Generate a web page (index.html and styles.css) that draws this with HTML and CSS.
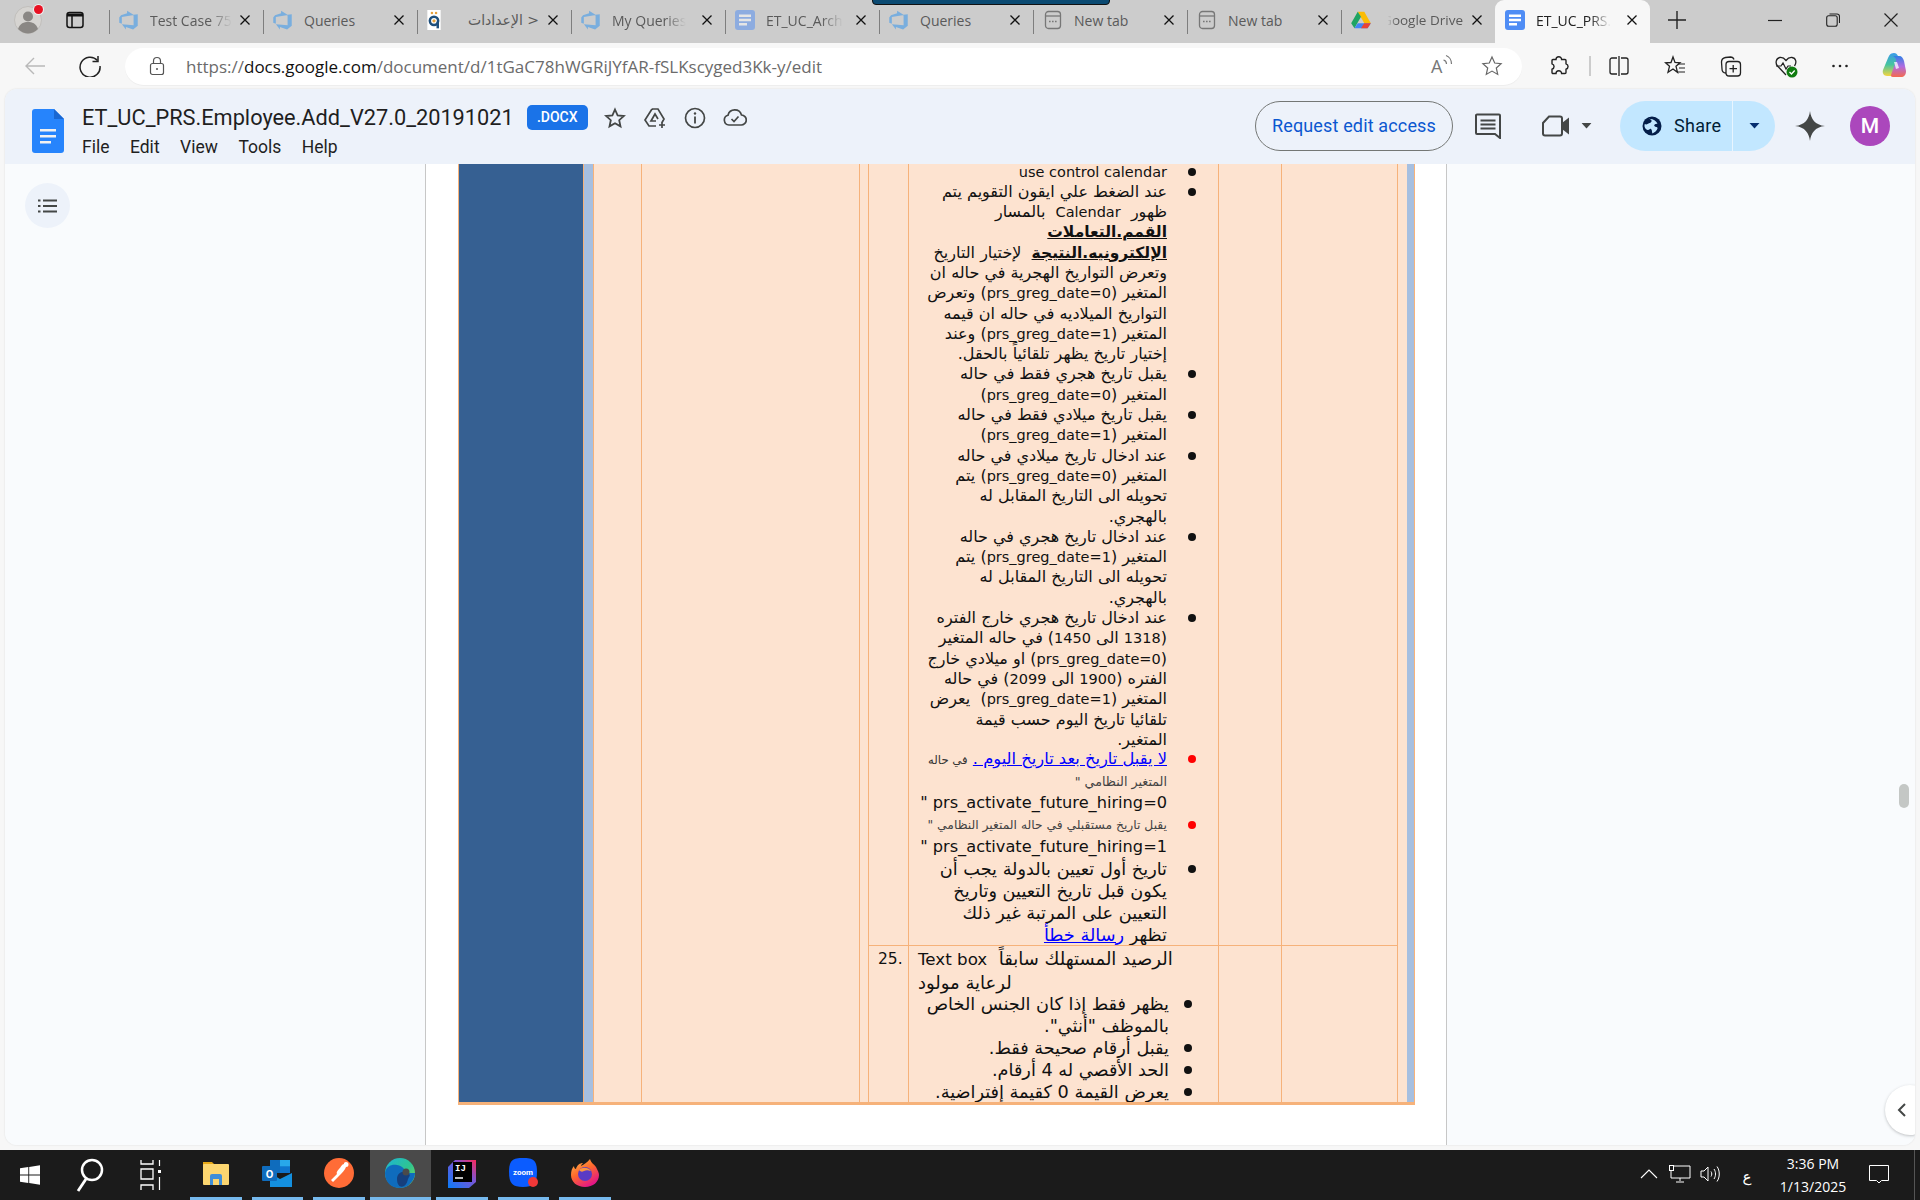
FILE: index.html
```html
<!DOCTYPE html>
<html lang="en">
<head>
<meta charset="utf-8">
<title>ET_UC_PRS.Employee.Add_V27.0_20191021</title>
<link rel="stylesheet" href="styles.css">
</head>
<body>
<svg class="defs" width="0" height="0" aria-hidden="true">
  <symbol id="i-ado" viewBox="0 0 24 24"><path fill="#79aede" d="M22.5 5v14l-5.6 4.5-8.6-3.100v3l-4.800-6.200 14 1.100V5.600zM17.800 5.900 9.700.9v3.100L2.400 6.200.3 9v6.300l3.100 1.300V8.500z"/></symbol>
  <symbol id="i-doc" viewBox="0 0 20 20"><rect width="20" height="20" rx="3" fill="#4f8df5"/><path fill="#fff" d="M4 4.500h12v2.400H4zM4 8.800h12v2.400H4zM4 13.100h8v2.400H4z"/></symbol>
  <symbol id="i-new" viewBox="0 0 20 20"><rect x="2.500" y="1.500" width="15" height="17" rx="3" fill="none" stroke="#777" stroke-width="1.300"/><path stroke="#777" stroke-width="1.300" d="M3 6h14"/><path stroke="#777" stroke-width="1.600" stroke-dasharray="1.600 1.400" d="M6 11.500h8"/></symbol>
  <symbol id="i-x" viewBox="0 0 12 12"><path d="M1.500 1.500l9 9M10.500 1.500l-9 9" stroke="#111" stroke-width="1.300" fill="none"/></symbol>
  <symbol id="i-caret" viewBox="0 0 10 6"><path d="M0 0h10L5 5.500z" fill="#444746"/></symbol>
</svg>

<div class="overlay-bar"></div>

<header class="tabstrip">
  <div class="strip-left">
    <span class="profile">
      <svg viewBox="0 0 28 28" width="28" height="28"><circle cx="14" cy="14" r="13.500" fill="#d6d4d1" stroke="#c0bebb"/><circle cx="14" cy="10.500" r="5" fill="#8a8784"/><path d="M4 23c2-6 6-7 10-7s8 1 10 7c-3 3-7 4.500-10 4.500S7 26 4 23z" fill="#8a8784"/></svg>
      <span class="profile-dot"></span>
    </span>
    <svg class="strip-icon" viewBox="0 0 20 20" width="20" height="20"><rect x="2" y="2.500" width="16" height="15" rx="2.500" fill="none" stroke="#111" stroke-width="1.500"/><path d="M2 3.500h16v3H2z" fill="#111"/><path d="M7 6v11" stroke="#111" stroke-width="1.500"/></svg>
  </div>
  <div class="tab">
    <svg class="tab-icon"><use href="#i-ado"/></svg><span class="tab-title tab-fade">Test Case 75</span><svg class="tab-x"><use href="#i-x"/></svg>
  </div>
  <div class="tab">
    <svg class="tab-icon"><use href="#i-ado"/></svg><span class="tab-title">Queries</span><svg class="tab-x"><use href="#i-x"/></svg>
  </div>
  <div class="tab">
    <svg class="tab-icon tab-icon-q" viewBox="0 0 16 24"><rect width="16" height="24" fill="#fff"/><circle cx="8" cy="13" r="5" fill="none" stroke="#1e4f7c" stroke-width="3"/><path d="M11 14h3v8h-3z" fill="#1e4f7c"/><circle cx="5.500" cy="3.500" r="1.500" fill="#e7a13c"/><circle cx="10.500" cy="3.500" r="1.500" fill="#e7a13c"/><circle cx="8" cy="13" r="2" fill="#e7a13c"/></svg>
    <span class="tab-title tab-title-ar" dir="rtl">&lt; الإعدادات</span><svg class="tab-x"><use href="#i-x"/></svg>
  </div>
  <div class="tab">
    <svg class="tab-icon"><use href="#i-ado"/></svg><span class="tab-title tab-fade">My Queries</span><svg class="tab-x"><use href="#i-x"/></svg>
  </div>
  <div class="tab">
    <svg class="tab-icon tab-icon-faded"><use href="#i-doc"/></svg><span class="tab-title tab-fade">ET_UC_Arch</span><svg class="tab-x"><use href="#i-x"/></svg>
  </div>
  <div class="tab">
    <svg class="tab-icon"><use href="#i-ado"/></svg><span class="tab-title">Queries</span><svg class="tab-x"><use href="#i-x"/></svg>
  </div>
  <div class="tab">
    <svg class="tab-icon"><use href="#i-new"/></svg><span class="tab-title">New tab</span><svg class="tab-x"><use href="#i-x"/></svg>
  </div>
  <div class="tab">
    <svg class="tab-icon"><use href="#i-new"/></svg><span class="tab-title">New tab</span><svg class="tab-x"><use href="#i-x"/></svg>
  </div>
  <div class="tab">
    <svg class="tab-icon tab-icon-drive" viewBox="0 0 24 22"><path d="M8 1h8l8 14h-8z" fill="#fbbc04"/><path d="M8 1 0 15l4 6 8-14z" fill="#1fa463"/><path d="M8 15h16l-4 6H4z" fill="#4285f4"/><path d="M16 15h8l-4 6h-8z" fill="#ea4335"/></svg>
    <span class="tab-title tab-title-drive">Google Drive</span><svg class="tab-x"><use href="#i-x"/></svg>
  </div>
  <div class="tab tab-active">
    <svg class="tab-icon"><use href="#i-doc"/></svg><span class="tab-title tab-fade">ET_UC_PRS.</span><svg class="tab-x"><use href="#i-x"/></svg>
  </div>
  <svg class="tab-plus" viewBox="0 0 20 20" width="20" height="20"><path d="M10 1v18M1 10h18" stroke="#222" stroke-width="1.400"/></svg>
  <div class="win-controls">
    <svg viewBox="0 0 14 14" width="14" height="14"><path d="M0 7.500h14" stroke="#222" stroke-width="1.200"/></svg>
    <svg viewBox="0 0 14 14" width="14" height="14"><rect x=".7" y="2.700" width="10.500" height="10.500" rx="2" fill="none" stroke="#222" stroke-width="1.100"/><path d="M3.500 1h7.500a2.500 2.500 0 0 1 2.500 2.500V10" fill="none" stroke="#222" stroke-width="1.100"/></svg>
    <svg viewBox="0 0 14 14" width="14" height="14"><path d="M.5.500l13 13M13.500.500l-13 13" stroke="#222" stroke-width="1.200"/></svg>
  </div>
</header>

<nav class="toolbar">
  <svg class="nav-back" viewBox="0 0 22 22" width="22" height="22"><path d="M21 11H2M10 3l-8 8 8 8" fill="none" stroke="#b9b9b9" stroke-width="1.400"/></svg>
  <svg class="nav-reload" viewBox="0 0 22 22" width="22" height="22"><path d="M18.500 5.500A10 10 0 1 0 21 11" fill="none" stroke="#222" stroke-width="1.500"/><path d="M19 1v5.500h-5.500" fill="none" stroke="#222" stroke-width="1.500"/></svg>
  <div class="address">
    <svg class="lock" viewBox="0 0 16 20" width="16" height="20"><rect x="1.500" y="7.500" width="13" height="11" rx="2" fill="none" stroke="#555" stroke-width="1.200"/><path d="M4.500 7.500V5a3.500 3.500 0 0 1 7 0v2.500" fill="none" stroke="#555" stroke-width="1.200"/><circle cx="8" cy="13" r="1" fill="#555"/></svg>
    <span class="url">https://<b>docs.google.com</b>/document/d/1tGaC78hWGRiJYfAR-fSLKscyged3Kk-y/edit</span>
    <span class="address-icons">
      <span class="read-aloud">
        <span class="read-a">A</span>
        <svg viewBox="0 0 12 12" width="12" height="12"><path d="M1.500 6c2 .5 3 2 3 4M4 1.500c3 1 5.500 4.500 5.500 8.500" fill="none" stroke="#777" stroke-width="1.200"/></svg>
      </span>
      <svg viewBox="0 0 22 22" width="22" height="22"><path d="M11 2l2.700 6 6.400.7-4.800 4.300 1.400 6.400-5.700-3.300-5.700 3.300L6.700 13 1.900 8.700 8.300 8z" fill="none" stroke="#666" stroke-width="1.200"/></svg>
    </span>
  </div>
  <div class="tools">
    <svg class="tool-puzzle" viewBox="0 0 22 22" width="22" height="22"><path d="M8 4.500a2.800 2.800 0 0 1 5.600 0h3.400a1 1 0 0 1 1 1v3.300a2.800 2.800 0 0 1 0 5.400v3.300a1 1 0 0 1-1 1h-3.400a2.800 2.800 0 0 0-5.600 0H5a1 1 0 0 1-1-1v-3.300a2.800 2.800 0 0 0 0-5.400V5.500a1 1 0 0 1 1-1z" fill="none" stroke="#222" stroke-width="1.400"/></svg>
    <span class="tool-sep"></span>
    <svg class="tool" viewBox="0 0 22 22" width="22" height="22"><path d="M9 3H4a2 2 0 0 0-2 2v12a2 2 0 0 0 2 2h5M13 3h5a2 2 0 0 1 2 2v12a2 2 0 0 1-2 2h-5M11 1v20" fill="none" stroke="#222" stroke-width="1.300"/></svg>
    <svg class="tool" viewBox="0 0 22 22" width="22" height="22"><path d="M9 2l2 5.500 5 .3-4 3.500 1.500 6L9 14l-5 3.300 1.500-6-4-3.500 5.500-.3z" fill="none" stroke="#222" stroke-width="1.300"/><path d="M14 9h7M15 13h6M14 17h7" stroke="#222" stroke-width="1.200"/></svg>
    <svg class="tool" viewBox="0 0 22 22" width="22" height="22"><path d="M6 18c-3 0-4-2-4-4L1.500 7c0-2 1.500-4 4-4.500l5-.5c2 0 3 1 3.500 2.500" fill="none" stroke="#222" stroke-width="1.300"/><rect x="6" y="6.500" width="14.500" height="14.500" rx="3" fill="none" stroke="#222" stroke-width="1.300"/><path d="M13.200 10v7.500M9.500 13.700h7.500" stroke="#222" stroke-width="1.300"/></svg>
    <span class="tool-health">
      <svg viewBox="0 0 24 24" width="24" height="24"><path d="M12 21 3.500 12C1 9 2 4 6 3.500c2.500-.3 4.500 1 6 3 1.500-2 3.500-3.300 6-3 4 .5 5 5 2.500 8.500" fill="none" stroke="#222" stroke-width="1.300"/><path d="M2 12h5l2-3 3 6 2-3h3" fill="none" stroke="#222" stroke-width="1.200"/><circle cx="18" cy="18" r="5.500" fill="#107c10"/><path d="M15.500 18l2 2 3.200-3.500" fill="none" stroke="#fff" stroke-width="1.300"/></svg>
    </span>
    <svg class="tool tool-dots" viewBox="0 0 22 22" width="22" height="22"><circle cx="4.500" cy="11" r="1.300" fill="#222"/><circle cx="11" cy="11" r="1.300" fill="#222"/><circle cx="17.500" cy="11" r="1.300" fill="#222"/></svg>
    <svg class="tool-copilot" viewBox="0 0 28 28" width="28" height="28">
      <defs>
        <linearGradient id="cp1" x1="0" y1="0" x2="0" y2="1"><stop offset="0" stop-color="#3a9bea"/><stop offset=".5" stop-color="#45c4a0"/><stop offset="1" stop-color="#f4d53f"/></linearGradient>
        <linearGradient id="cp2" x1="0" y1="0" x2="0" y2="1"><stop offset="0" stop-color="#2f7fe6"/><stop offset=".5" stop-color="#b06be0"/><stop offset="1" stop-color="#f56a4f"/></linearGradient>
      </defs>
      <path d="M15 1c-4 0-5 3-6 5L4 18c-1 3 1 6 4 6h5l6-20c-1-2-2-3-4-3z" fill="url(#cp1)"/>
      <path d="M14 4h6c3 0 4 2 5 5l2 10c0 4-2 6-5 6h-8c-2 0-2-1-2-2l5-14c.3-1 0-3-3-5z" fill="url(#cp2)"/>
      <path d="M15 10h3l2 6-3 1z" fill="#fff" opacity=".75"/>
    </svg>
  </div>
</nav>

<main class="docs">
  <div class="docs-header">
    <svg class="docs-logo" viewBox="0 0 32 44" width="32" height="44"><path d="M3 0h19l10 10v31a3 3 0 0 1-3 3H3a3 3 0 0 1-3-3V3a3 3 0 0 1 3-3z" fill="#2684fc"/><path d="M22 0l10 10H22z" fill="#1967d2"/><path d="M8 20h16v2.500H8zM8 26h16v2.500H8zM8 32h11v2.500H8z" fill="#f1f1f1"/></svg>
    <div class="docs-titleblock">
      <div class="title-row">
        <span class="doc-title">ET_UC_PRS.Employee.Add_V27.0_20191021</span>
        <span class="docx-badge">.DOCX</span>
        <svg class="head-icon" viewBox="0 0 24 24" width="24" height="24"><path d="M12 3.500l2.600 5.800 6.300.7-4.700 4.200 1.300 6.200-5.500-3.200-5.500 3.200 1.300-6.200L3.100 10l6.300-.7z" fill="none" stroke="#444746" stroke-width="1.800"/></svg>
        <svg class="head-icon" viewBox="0 0 24 24" width="24" height="24"><path d="M9 3h6l6 10-2 3.500M13 20H6l-4-6 7-11M13 15H8l4-7 3 5" fill="none" stroke="#444746" stroke-width="1.700"/><path d="M19 16v6M16 19h6" stroke="#444746" stroke-width="1.700"/></svg>
        <svg class="head-icon" viewBox="0 0 24 24" width="24" height="24"><circle cx="12" cy="12" r="9.500" fill="none" stroke="#444746" stroke-width="1.700"/><path d="M12 10.500v7" stroke="#444746" stroke-width="1.800"/><circle cx="12" cy="7.500" r="1.200" fill="#444746"/></svg>
        <svg class="head-icon" viewBox="0 0 24 24" width="24" height="24"><path d="M6 19a5 5 0 0 1-1-9.800A7 7 0 0 1 18.500 9 5 5 0 0 1 18 19z" fill="none" stroke="#444746" stroke-width="1.700"/><path d="M8.500 13l2.500 2.500 4.500-5" fill="none" stroke="#444746" stroke-width="1.700"/></svg>
      </div>
      <div class="menu"><span>File</span><span>Edit</span><span>View</span><span>Tools</span><span>Help</span></div>
    </div>
    <div class="head-right">
      <span class="request-btn">Request edit access</span>
      <svg class="comment-icon" viewBox="0 0 26 26" width="26" height="26"><path d="M2 1.500h22a1 1 0 0 1 1 1V20l0 5-5-4H2a1 1 0 0 1-1-1V2.500a1 1 0 0 1 1-1z" fill="none" stroke="#444746" stroke-width="2"/><path d="M5.500 6.500h15v2h-15zM5.500 10.500h15v2h-15zM5.500 14.500h15v2h-15z" fill="#444746"/></svg>
      <span class="meet">
        <svg viewBox="0 0 28 22" width="28" height="22"><path d="M7 1.500h11a2 2 0 0 1 2 2V18.500a2 2 0 0 1-2 2H3a2 2 0 0 1-2-2V8z" fill="none" stroke="#444746" stroke-width="2"/><path d="M20 8l7-5.500v17L20 14z" fill="#444746"/></svg>
        <svg class="caret" viewBox="0 0 10 6"><use href="#i-caret"/></svg>
      </span>
      <span class="share">
        <span class="share-main">
          <svg viewBox="0 0 20 20" width="20" height="20"><circle cx="10" cy="10" r="9.500" fill="#041e49"/><path d="M7 2.500c1.500 1 3 1.500 2.500 3S6.500 7 5.500 8s-2 0-3 .5c-.5 2.500 1 5 3 5.500s2-2 3.500-1 .5 3 1.500 4.500c2-1 4.500-3 5-5s-2-1-3-2.500 1-2 3-2.500c-1.500-3-5-5-8.500-4.500z" fill="#c2e7ff"/></svg>
          Share
        </span>
        <span class="share-drop"><svg class="caret" viewBox="0 0 10 6"><path d="M0 0h10L5 5.500z" fill="#062e6f"/></svg></span>
      </span>
      <svg class="gemini" viewBox="0 0 30 30" width="30" height="30"><path d="M15 0c1 8 5 14 15 15-10 1-14 7-15 15-1-8-5-14-15-15C10 14 14 8 15 0z" fill="#444746"/></svg>
      <span class="avatar">M</span>
    </div>
  </div>

  <div class="docs-body">
    <aside class="side-left">
      <span class="outline-btn">
        <svg viewBox="0 0 20 14" width="20" height="14"><path d="M5 1.500h14M5 7h14M5 12.500h14" stroke="#444746" stroke-width="1.800"/><path d="M0 1.500h2.500M0 7h2.500M0 12.500h2.500" stroke="#444746" stroke-width="1.800"/></svg>
      </span>
    </aside>
    <section class="page">
      <div class="doc-table">
        <div class="col-blue"></div>
        <div class="col-lightblue"></div>
        <div class="col-plain col-a"></div>
        <div class="col-plain col-b"></div>
        <div class="col-plain col-c"></div>
        <div class="rows">
          <div class="row row-first">
            <div class="cell cell-num"></div>
            <div class="cell cell-main">
              <ul class="blist blist-top" dir="rtl">
                <li><span class="dot"></span><span class="txt"><span class="lat">use control calendar</span></span></li>
                <li><span class="dot"></span><span class="txt">عند الضغط علي ايقون التقويم يتم<br>ظهور&nbsp; <span class="lat">Calendar</span>&nbsp; بالمسار<br><b class="ul">القمم.التعاملات</b><br><b class="ul">الإلكترونيه.النتيجة</b>&nbsp; لإختيار التاريخ<br>وتعرض التواريخ الهجرية في حاله ان<br>المتغير (<span class="lat">prs_greg_date=0</span>) وتعرض<br>التواريخ الميلاديه في حاله ان قيمه<br>المتغير (<span class="lat">prs_greg_date=1</span>) وعند<br>إختيار تاريخ يظهر تلقائياً بالحقل.</span></li>
                <li><span class="dot"></span><span class="txt">يقبل تاريخ هجري فقط في حاله<br>المتغير (<span class="lat">prs_greg_date=0</span>)</span></li>
                <li><span class="dot"></span><span class="txt">يقبل تاريخ ميلادي فقط في حاله<br>المتغير (<span class="lat">prs_greg_date=1</span>)</span></li>
                <li><span class="dot"></span><span class="txt">عند ادخال تاريخ ميلادي في حاله<br>المتغير (<span class="lat">prs_greg_date=0</span>) يتم<br>تحويله الى التاريخ المقابل له<br>بالهجري.</span></li>
                <li><span class="dot"></span><span class="txt">عند ادخال تاريخ هجري في حاله<br>المتغير (<span class="lat">prs_greg_date=1</span>) يتم<br>تحويله الى التاريخ المقابل له<br>بالهجري.</span></li>
                <li><span class="dot"></span><span class="txt">عند ادخال تاريخ هجري خارج الفتره<br>(<span class="lat">1318</span> الى <span class="lat">1450</span>) في حاله المتغير<br>(<span class="lat">prs_greg_date=0</span>) او ميلادي خارج<br>الفتره (<span class="lat">1900</span> الى <span class="lat">2099</span>) في حاله<br>المتغير (<span class="lat">prs_greg_date=1</span>)&nbsp; يعرض<br>تلقائيا تاريخ اليوم حسب قيمة<br>المتغير.</span></li>
              </ul>
              <ul class="blist blist-red" dir="rtl">
                <li><span class="dot dot-red"></span><span class="txt"><span class="small-line"><a class="link">لا يقبل تاريخ بعد تاريخ اليوم .</a> <small>في حاله</small></span><span class="small-line small-grey">المتغير النظامي "</span><span class="var-line">prs_activate_future_hiring=0 "</span></span></li>
                <li><span class="dot dot-red"></span><span class="txt"><span class="small-line small-grey small-second">يقبل تاريخ مستقبلي في حاله المتغير النظامي "</span><span class="var-line">prs_activate_future_hiring=1 "</span></span></li>
              </ul>
              <ul class="blist blist-big" dir="rtl">
                <li><span class="dot"></span><span class="txt">تاريخ أول تعيين بالدولة يجب أن<br>يكون قبل تاريخ التعيين وتاريخ<br>التعيين على المرتبة غير ذلك<br>تظهر <a class="link">رسالة خطأ</a></span></li>
              </ul>
            </div>
            <div class="cell cell-c"></div>
            <div class="cell cell-d"></div>
          </div>
          <div class="row row-second">
            <div class="cell cell-num"><span class="num">25.</span></div>
            <div class="cell cell-main cell-main-2">
              <p class="field-name"><span class="field-lat">Text box</span>&nbsp; الرصيد المستهلك سابقاً<br>لرعاية مولود</p>
              <ul class="blist blist-big blist-second" dir="rtl">
                <li><span class="dot"></span><span class="txt">يظهر فقط إذا كان الجنس الخاص<br>بالموظف "أنثي".</span></li>
                <li><span class="dot"></span><span class="txt">يقبل أرقام صحيحة فقط.</span></li>
                <li><span class="dot"></span><span class="txt">الحد الأقصي له 4 أرقام.</span></li>
                <li><span class="dot"></span><span class="txt">يعرض القيمة 0 كقيمة إفتراضية.</span></li>
              </ul>
            </div>
            <div class="cell cell-c"></div>
            <div class="cell cell-d"></div>
          </div>
        </div>
        <div class="col-end"></div>
        <div class="col-lightblue col-lightblue-right"></div>
      </div>
    </section>
    <aside class="side-right"></aside>
    <span class="scroll-thumb"></span>
    <span class="collapse-btn"><svg viewBox="0 0 10 16" width="10" height="16"><path d="M8 2 2 8l6 6" fill="none" stroke="#444746" stroke-width="2"/></svg></span>
  </div>
</main>

<footer class="taskbar">
  <span class="tb-sys"><svg viewBox="0 0 20 20" width="20" height="20"><path fill="#fff" d="M0 3.200 8.300 2v7.500H0zM9.200 1.900 20 .3v9.200H9.200zM0 10.500h8.300V18L0 16.800zM9.200 10.500H20v9.200L9.200 18.100z"/></svg></span>
  <span class="tb-sys"><svg viewBox="0 0 28 36" width="28" height="36"><circle cx="16" cy="13" r="10" fill="none" stroke="#fff" stroke-width="2.500"/><path d="M10 22 2 34" stroke="#fff" stroke-width="2.800"/></svg></span>
  <span class="tb-sys"><svg viewBox="0 0 22 30" width="22" height="30"><path d="M2 0v4h12V0M2 9h12v10H2zM2 30v-5h12v5" fill="none" stroke="#fff" stroke-width="1.300"/><rect x="19" y="10" width="3" height="3" fill="#fff"/><path d="M20.500 0v6M20.500 17v13" stroke="#fff" stroke-width="1.200"/></svg></span>
  <span class="tb-gap"></span>
  <span class="tb-app"><svg viewBox="0 0 28 26" width="28" height="26"><path d="M1 2h9l3 3H1z" fill="#e6a817"/><rect x="1" y="4" width="26" height="21" rx="1" fill="#fcd670"/><path d="M8 25v-9a2 2 0 0 1 2-2h8a2 2 0 0 1 2 2v9h-3v-6h-6v6z" fill="#3f8ed8"/></svg></span>
  <span class="tb-app"><svg viewBox="0 0 30 28" width="30" height="28"><path d="M8 1h20v13H8z" fill="#0f6cbd"/><path d="M18 1h10v6.500H18z" fill="#28a8ea"/><path d="M18 7.500h10V14H18z" fill="#0f78d4" opacity=".75"/><path d="M8 14l10 6 12-6v14H8z" fill="#1490df"/><rect x="0" y="7" width="15" height="15" rx="1" fill="#0f6cbd"/><text x="7.500" y="19" class="ol-o">O</text></svg></span>
  <span class="tb-app"><svg viewBox="0 0 30 30" width="30" height="30"><circle cx="15" cy="15" r="15" fill="#ff6c37"/><path d="M22 4a2.500 2.500 0 0 1 0 5c-1 3-4 6-7 9l-6 6-2-2 6-6c-1-1 0-3 2-5s3-5 5-5c-.5-1 .5-2 2-2z" fill="#fff"/></svg></span>
  <span class="tb-app tb-active"><svg viewBox="0 0 30 30" width="30" height="30"><defs><linearGradient id="ed1" x1="0" y1="0" x2="1" y2="1"><stop offset="0" stop-color="#1db5d6"/><stop offset=".55" stop-color="#2fc58f"/><stop offset="1" stop-color="#8fdc4b"/></linearGradient></defs><circle cx="15" cy="15" r="15" fill="url(#ed1)"/><path d="M0 15C1 8 7 6 12 7c6 1 9 5 7 8h11c0 0 0 4-2 7-3 5-7 8-13 8C6 30 0 24 0 15z" fill="#0f6cbd"/><path d="M12 21c0-5 4-8 8-7 4 .5 6 3 4 5-2 3-1 6-5 9-3 2-7 0-7-7z" fill="#163f7c"/><circle cx="21" cy="14" r="3.500" fill="#4a4a4a"/></svg></span>
  <span class="tb-app"><svg viewBox="0 0 30 30" width="30" height="30"><defs><linearGradient id="ij1" x1="0" y1="1" x2="1" y2="0"><stop offset="0" stop-color="#087cfa"/><stop offset=".6" stop-color="#7a55d6"/><stop offset="1" stop-color="#fe2857"/></linearGradient></defs><path d="M8 2h21v22l-7 6H1V9z" fill="url(#ij1)"/><rect x="6" y="4" width="19" height="20" fill="#000"/><text x="8" y="13" class="ij-t">IJ</text><path d="M8 20h8" stroke="#fff" stroke-width="1.500"/></svg></span>
  <span class="tb-app"><svg viewBox="0 0 32 32" width="32" height="32"><path d="M16 1c10 0 14 2 14 14s-4 15-14 15S2 27 2 15 6 1 16 1z" fill="#0b5cff"/><text x="16" y="18" class="zoom-t">zoom</text><circle cx="26" cy="25" r="5" fill="#f03838"/></svg></span>
  <span class="tb-app"><svg viewBox="0 0 30 30" width="30" height="30"><defs><linearGradient id="ff1" x1="0" y1="0" x2=".6" y2="1"><stop offset="0" stop-color="#ffbd4f"/><stop offset=".5" stop-color="#ff6a2b"/><stop offset="1" stop-color="#e31587"/></linearGradient></defs><path d="M20 1c1 4 4 5 6 8 2 4 3 6 3 8 0 7-6 12-14 12S1 24 1 17c0-4 1-7 3-9 0 2 1 3 2 3 1-4 4-6 7-6-2 2-2 3-2 3 3-2 6-3 9-7z" fill="url(#ff1)"/><circle cx="15" cy="16" r="7" fill="#5b3bc4"/><path d="M9 12c3-3 9-3 12 1-3-1-5-1-7 0s-3 1-5-1z" fill="#ff9640"/></svg></span>
  <span class="tb-spacer"></span>
  <svg class="tray" viewBox="0 0 18 10" width="18" height="10"><path d="M1 9l8-8 8 8" fill="none" stroke="#fff" stroke-width="1.100"/></svg>
  <svg class="tray tray-net" viewBox="0 0 22 18" width="22" height="18"><path d="M5 1h16v12H2V5M11 13v3M7 17h8" fill="none" stroke="#fff" stroke-width="1"/><rect x=".5" y=".5" width="4" height="5" fill="none" stroke="#fff"/></svg>
  <svg class="tray tray-vol" viewBox="0 0 22 18" width="22" height="18"><path d="M1 6h3l4-4v14l-4-4H1z" fill="none" stroke="#fff"/><path d="M11 6.500c1 1.500 1 3.500 0 5M14 4c2 3 2 7 0 10M17 1.500c3 4 3 11 0 15" fill="none" stroke="#fff"/></svg>
  <span class="lang">ع</span>
  <span class="clock"><span>3:36 PM</span><span>1/13/2025</span></span>
  <svg class="notif" viewBox="0 0 20 20" width="20" height="20"><path d="M.5.500h19v15h-7L10 18l-2.500-2.500h-7z" fill="none" stroke="#fff"/></svg>
  <span class="tb-edge"></span>
</footer>
</body>
</html>
```

FILE: styles.css
```css
* { box-sizing: border-box; }
html, body { margin: 0; padding: 0; }
body {
  width: 1920px;
  height: 1200px;
  overflow: hidden;
  display: flex;
  flex-direction: column;
  position: relative;
  background: #f7f7f7;
  font-family: "Open Sans", "DejaVu Sans", sans-serif;
}
svg { display: block; flex: none; }
.defs { position: absolute; }

.overlay-bar {
  position: absolute;
  left: 872px;
  top: -2px;
  width: 238px;
  height: 7px;
  background: #0b4a72;
  border: 1px solid #111;
  border-radius: 0 0 4px 4px;
  z-index: 5;
}

/* tab strip */
.tabstrip {
  height: 43px;
  flex: none;
  background: #cccccc;
  display: flex;
  align-items: center;
}
.strip-left {
  width: 109px;
  height: 100%;
  flex: none;
  display: flex;
  align-items: center;
  padding-left: 14px;
  gap: 23px;
}
.profile { position: relative; display: block; width: 28px; height: 28px; margin-top: -3px; }
.profile-dot {
  position: absolute;
  right: -1px;
  top: -1px;
  width: 9px;
  height: 9px;
  border-radius: 50%;
  background: #e81123;
  box-shadow: 0 0 0 1px #eee;
}
.strip-icon { margin-top: -3px; }
.tab {
  width: 154px;
  height: 43px;
  flex: none;
  display: flex;
  align-items: center;
  padding: 0 12px 3px 10px;
  position: relative;
}
.tab::before {
  content: "";
  position: absolute;
  left: 0;
  top: 10px;
  height: 24px;
  width: 1px;
  background: #7e7e7e;
}
.tab-icon { width: 20px; height: 20px; margin-right: 11px; }
.tab-icon-q { width: 14px; height: 20px; margin-right: 0; }
.tab-icon-drive { width: 20px; height: 18px; margin-right: 7px; }
.tab-icon-faded { opacity: .5; }
.tab-title {
  white-space: nowrap;
  font-size: 14px;
  color: #5a5a5a;
}
.tab-fade {
  -webkit-mask-image: linear-gradient(to right, #000 72%, transparent 100%);
  mask-image: linear-gradient(to right, #000 72%, transparent 100%);
}
.tab-title-ar { font-family: "DejaVu Sans", sans-serif; font-size: 14px; margin-left: auto; }
.tab-title-drive {
  font-size: 13.500px;
  margin-left: auto;
  -webkit-mask-image: linear-gradient(to right, transparent 7%, #000 18%);
  mask-image: linear-gradient(to right, transparent 7%, #000 18%);
}
.tab-x { width: 12px; height: 12px; margin-left: auto; }
.tab-title-ar + .tab-x, .tab-title-drive + .tab-x { margin-left: 8px; }
.tab-active {
  width: 155px;
  background: #f7f7f7;
  border-radius: 9px 9px 0 0;
  margin-left: 0;
}
.tab-active::before { display: none; }
.tab-active .tab-title { color: #222; }
.tab-plus { margin-left: 17px; margin-top: -3px; }
.win-controls {
  margin-left: auto;
  width: 130px;
  margin-right: 22px;
  display: flex;
  justify-content: space-between;
  margin-top: -3px;
}

/* toolbar */
.toolbar {
  height: 46px;
  flex: none;
  background: #f7f7f7;
  display: flex;
  align-items: center;
  padding-left: 24px;
}
.nav-back { margin-right: 33px; }
.nav-reload { margin-right: 24px; }
.address {
  width: 1397px;
  height: 37px;
  flex: none;
  background: #fff;
  border-radius: 19px;
  display: flex;
  align-items: center;
  padding-left: 24px;
  box-shadow: 0 1px 0 #eee;
}
.lock { margin-right: 21px; }
.url { font-size: 17px; color: #6b6b6b; white-space: nowrap; }
.url b { font-weight: 400; color: #111; }
.address-icons { margin-left: auto; display: flex; align-items: center; gap: 26px; padding-right: 19px; }
.read-aloud { display: flex; width: 24px; align-items: flex-start; }
.read-a { font-size: 18px; line-height: 24px; color: #777; }
.tools { display: flex; align-items: center; padding-left: 26px; flex: none; }
.tool-puzzle { margin-right: 19px; }
.tool-sep { width: 2px; height: 20px; background: #ccc; margin-right: 17px; }
.tool { margin-right: 34px; }
.tool-health { display: block; margin-left: -2px; margin-right: 31px; }
.tool-dots { margin-right: 28px; }

/* docs window */
.docs {
  height: 1056px;
  flex: none;
  margin: 0 5px;
  border-radius: 12px;
  overflow: hidden;
  background: #f9fbfd;
  display: flex;
  flex-direction: column;
  box-shadow: 0 0 2px rgba(0,0,0,.12);
}
.docs-header {
  height: 75px;
  flex: none;
  background: #edf2fa;
  display: flex;
  align-items: flex-start;
  padding-left: 27px;
}
.docs-logo { margin-top: 20px; margin-right: 18px; }
.docs-titleblock { padding-top: 15px; }
.title-row { display: flex; align-items: center; height: 27px; }
.doc-title { font: 400 21.750px/27px Roboto, sans-serif; color: #1f1f1f; white-space: nowrap; }
.docx-badge {
  margin-left: 13px;
  width: 61px;
  height: 25px;
  margin-right: 15px;
  background: #1a73e8;
  color: #fff;
  border-radius: 5px;
  font: 500 14px/25px Roboto, sans-serif;
  text-align: center;
}
.head-icon { margin-right: 16px; }
.menu {
  display: flex;
  gap: 20.500px;
  margin-top: 6px;
  font: 400 17.500px/20px Roboto, sans-serif;
  color: #1f1f1f;
}
.head-right {
  margin-left: auto;
  display: flex;
  align-items: center;
  height: 50px;
  margin-top: 12px;
  padding-right: 25px;
}
.request-btn {
  width: 198px;
  height: 50px;
  border: 1px solid #747775;
  border-radius: 25px;
  color: #0b57d0;
  font: 400 18px/48px Roboto, sans-serif;
  letter-spacing: .15px;
  text-align: center;
}
.comment-icon { margin-left: 22px; }
.meet { display: flex; align-items: center; margin-left: 41px; }
.caret { width: 11px; height: 6px; }
.meet .caret { margin-left: 11px; }
.share {
  margin-left: 28px;
  height: 50px;
  width: 155px;
  background: #c2e7ff;
  border-radius: 25px;
  display: flex;
  overflow: hidden;
}
.share-main {
  width: 113px;
  display: flex;
  align-items: center;
  gap: 12px;
  padding-left: 22px;
  border-right: 1px solid #e8f5ff;
  font: 400 18px/50px Roboto, sans-serif;
  letter-spacing: .3px;
  color: #001d35;
}
.share-drop { flex: 1; display: flex; align-items: center; justify-content: center; }
.gemini { margin-left: 20px; }
.avatar {
  margin-left: 25px;
  width: 40px;
  height: 40px;
  border-radius: 50%;
  background: #ab47bc;
  color: #fff;
  font: 500 21px/40px Roboto, sans-serif;
  text-align: center;
}

.docs-body {
  flex: 1;
  display: flex;
  min-height: 0;
  position: relative;
}
.side-left { width: 420px; flex: none; background: #f9fbfd; padding: 19px 0 0 20px; }
.outline-btn {
  width: 45px;
  height: 45px;
  border-radius: 50%;
  background: #edf2fa;
  display: flex;
  align-items: center;
  justify-content: center;
}
.page {
  width: 1022px;
  flex: none;
  background: #fff;
  border-left: 1px solid #c7c7c7;
  border-right: 1px solid #c7c7c7;
  padding-left: 32px;
}
.side-right { flex: 1; background: #f9fbfd; }
.scroll-thumb {
  position: absolute;
  right: 6px;
  top: 620px;
  width: 10px;
  height: 24px;
  border-radius: 5px;
  background: #c4c7c5;
}
.collapse-btn {
  position: absolute;
  left: 1880px;
  top: 921px;
  width: 50px;
  height: 50px;
  border-radius: 50%;
  background: #fff;
  box-shadow: 0 1px 3px rgba(60,64,67,.3);
  display: flex;
  align-items: center;
  padding-left: 12px;
}

/* document table */
.doc-table {
  width: 957px;
  height: 941px;
  display: flex;
  overflow: hidden;
  background: #fde3d0;
  font-family: "DejaVu Sans", sans-serif;
  color: #111;
  border-bottom: 3px solid #f6b27a;
}
.col-blue {
  width: 126px;
  flex: none;
  background: #366092;
  border-left: 1px solid #f6b27a;
  border-right: 1px solid #f6b27a;
}
.col-lightblue { width: 10px; flex: none; background: #a6bfe0; border-right: 1px solid #f6b27a; }
.col-lightblue-right { width: 8px; }
.col-end { width: 9px; flex: none; }
.col-plain { flex: none; border-right: 1px solid #f6b27a; }
.col-a { width: 48px; }
.col-b { width: 218px; }
.col-c { width: 9px; }
.rows { width: 529px; flex: none; display: flex; flex-direction: column; }
.row { display: flex; }
.row-first { height: 781px; flex: none; overflow: hidden; }
.row-second { flex: 1; border-top: 1px solid #f6b27a; min-height: 0; }
.cell { flex: none; border-right: 1px solid #f6b27a; }
.cell-num { width: 40px; }
.cell-main { width: 310px; font-size: 16px; line-height: 20.300px; white-space: nowrap; padding-right: 22px; }
.cell-c { width: 63px; }
.cell-d { width: 116px; }

.blist { list-style: none; margin: 0; padding: 0; }
.blist-top { margin-top: -2.500px; }
.blist-red { margin-top: -2px; }
.blist li { display: flex; align-items: flex-start; }
.dot {
  width: 8px;
  height: 8px;
  border-radius: 50%;
  background: #111;
  flex: none;
  margin-top: 6px;
  margin-left: 21px;
}
.dot-red { background: #f00; margin-top: 7px; }
.txt { display: block; text-align: right; }
.lat { font-size: 14.500px; }
.ul { text-decoration: underline; font-weight: 700; font-size: 15.500px; }
.link { color: #0000ff; text-decoration: underline; }

.small-line { display: block; font-size: 16.300px; line-height: 21px; }
.small-line small { font-size: 11.700px; color: #333; }
.small-line.small-grey { font-size: 12.700px; color: #444; }
.small-line.small-second { font-size: 12.300px; line-height: 22px; }
.var-line { display: block; font-size: 16.200px; line-height: 22px; }

.blist-big { font-size: 17.700px; line-height: 22px; }
.blist-big .dot { margin-top: 7px; }

.num { display: block; font-size: 15.500px; line-height: 24px; padding: 1px 0 0 9px; }
.cell-main-2 { padding: 1px 0 0 0; }
.field-name {
  margin: 0;
  padding-left: 9px;
  font-size: 18px;
  line-height: 23px;
  text-align: left;
}
.field-lat { font-size: 16.700px; }
.blist-second { padding-right: 26px; margin-top: -1px; }
.blist-second .dot { margin-left: 15px; }

/* taskbar */
.taskbar {
  height: 50px;
  flex: none;
  margin-top: 5px;
  background: #1b1b1b;
  display: flex;
  align-items: stretch;
  color: #fff;
  font-family: "Open Sans", sans-serif;
}
.tb-sys { width: 60px; display: flex; align-items: center; justify-content: center; }
.tb-gap { width: 5px; }
.tb-app { width: 61.500px; display: flex; align-items: center; justify-content: center; position: relative; padding-bottom: 4px; }
.tb-app::after {
  content: "";
  position: absolute;
  left: 5px;
  right: 5px;
  bottom: 0;
  height: 3px;
  background: #76b9ed;
}
.tb-active { background: #4a4a4a; }
.tb-active::after { left: 0; right: 0; }
.ol-o { font: 700 11px Roboto, sans-serif; fill: #fff; text-anchor: middle; }
.ij-t { font: 700 9px "Liberation Mono", monospace; fill: #fff; }
.zoom-t { font: 700 8px Roboto, sans-serif; fill: #fff; text-anchor: middle; }
.tb-spacer { flex: 1; }
.tray { align-self: center; margin-bottom: 2px; }
.tray-net { margin-left: 11px; }
.tray-vol { margin-left: 9px; }
.lang { width: 34px; margin-left: 8px; text-align: center; font: 15px/50px "DejaVu Sans", sans-serif; padding-top: 2px; }
.clock {
  width: 100px;
  margin-left: -1px;
  display: flex;
  flex-direction: column;
  align-items: center;
  justify-content: center;
  gap: 3px;
  font-size: 14px;
  line-height: 20px;
}
.notif { align-self: center; margin-left: 6px; }
.tb-edge { width: 1px; background: #555; margin-left: 25px; margin-right: 5px; }
```
